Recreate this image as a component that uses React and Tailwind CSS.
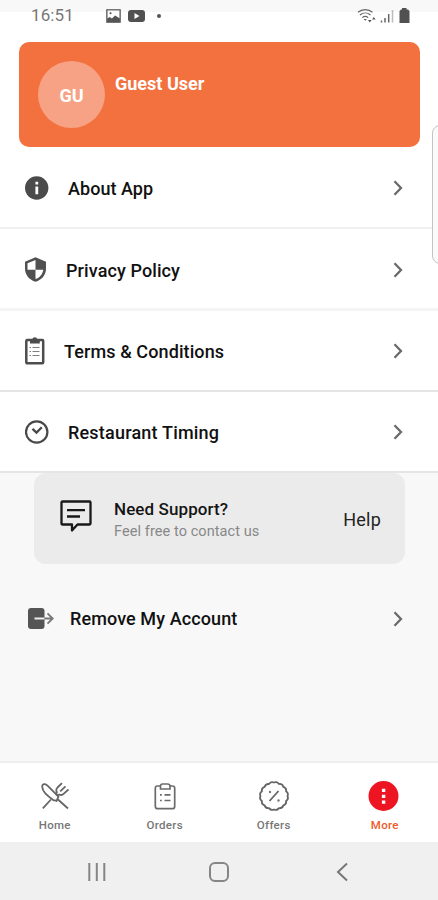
import React from 'react';

const Chevron = () => (
  <svg className="h-5 w-5 shrink-0" viewBox="0 0 20 20" fill="none" stroke="#6a6a6a" strokeWidth="2.3">
    <path d="M6.500 3.200 13 10 6.500 16.800" />
  </svg>
);

const InfoIcon = () => (
  <svg className="h-6 w-6" viewBox="0 0 24 24">
    <circle cx="11.700" cy="12" r="11.700" fill="#4b4b4b" />
    <path d="M10.400 5.800h2.800v2.700h-2.800zM10.400 10.400h2.800v7.800h-2.800z" fill="#fff" />
  </svg>
);

const ShieldIcon = () => (
  <svg className="h-[25px] w-[22px]" viewBox="0 0 22 25">
    <path d="M10.500 .3 21 4.800v7c0 6.100-4.300 11.300-10.500 12.900C4.300 23.100 0 17.900 0 11.800v-7z" fill="#505050" />
    <path d="M10.500 3v9.700H2.500V6.300zM10.500 12.700h7.800c-.6 4.300-3.500 8-7.800 9.300z" fill="#fff" />
  </svg>
);

const TermsIcon = () => (
  <svg className="h-7 w-5" viewBox="0 0 20 28" fill="none" stroke="#4d4d4d">
    <rect x="1.300" y="3" width="16.900" height="23.300" rx="1" strokeWidth="2.500" />
    <path d="M5 2.300h2.300C7.600.9 8.500.2 9.800.2s2.200.7 2.500 2.100h2.500V6.500H5z" fill="#4d4d4d" stroke="none" />
    <path d="M4.500 10.500H6M7.500 10.500h7M4.500 14.500H6M7.500 14.500h7M4.500 18.500H6M7.500 18.500h7" strokeWidth="1.200" stroke="#808080" />
  </svg>
);

const ClockIcon = () => (
  <svg className="h-6 w-6" viewBox="0 0 24 24" fill="none" stroke="#484848">
    <circle cx="11.700" cy="12" r="10.700" strokeWidth="2.200" />
    <path d="m7.500 8.900 4 3.700 5.300-5.300" strokeWidth="2.300" />
  </svg>
);

const StatusBar = () => (
  <div className="flex h-[42px] shrink-0 flex-col">
    <div className="h-3 shrink-0 bg-[#f8f8f8]" />
    <div className="-mt-3 flex h-[31px] items-center pl-[31px] pr-7 text-[#777]">
      <span className="w-[75px] whitespace-nowrap pt-px text-[17px] tracking-[0.1px]">16:51</span>
      <svg className="h-[14px] w-[15px]" viewBox="0 0 14 14" preserveAspectRatio="none" fill="none" stroke="#555">
        <rect x=".8" y=".8" width="12.400" height="12.400" strokeWidth="1.200" />
        <path d="m1 9.500 2.500-1.500 2 1.500 3-3L13 9.500V13H1z" fill="#555" stroke="none" />
        <circle cx="4.200" cy="4.200" r="1" fill="#555" stroke="none" />
      </svg>
      <svg className="ml-[7px] h-3 w-[17px]" viewBox="0 0 17 12">
        <rect width="17" height="12" rx="3" fill="#515151" />
        <path d="m6.500 3 5 3-5 3z" fill="#fff" />
      </svg>
      <span className="ml-[12px] h-[4px] w-[4px] rounded-full bg-[#555]" />
      <svg className="ml-auto h-4 w-[20px]" viewBox="0 0 20 16" fill="none" stroke="#666" strokeWidth="1.200">
        <path d="M1 4.300c4.200-3.700 10.300-3.700 14.500 0M3 7c3.100-2.700 7.400-2.700 10.500 0M5.300 9.600c1.800-1.500 4.100-1.500 5.900 0" />
        <path d="m6.700 11 1.500 1.700L9.800 11zM11 12h3.600l-1.800 2.600zM15 11.500h3.600l-1.800-2.600z" fill="#555" stroke="none" />
      </svg>
      <svg className="ml-[3px] h-[14px] w-[14px]" viewBox="0 0 14 14" strokeWidth="1.500" stroke="#666">
        <path d="M1.500 11.500V13.500M5 9v4.500M8.700 5v8.500" />
        <path d="M12.500 1v12.500" stroke="#bbb" />
      </svg>
      <svg className="ml-[5px] h-[15px] w-[11px]" viewBox="0 0 11 15">
        <path d="M3 0h4.500v1.500H9L10.500 3v12H.5V3L2 1.500h1z" fill="#515151" />
      </svg>
    </div>
  </div>
);

const Row = ({ icon, label, box, border, text }) => (
  <div className={'flex shrink-0 items-center bg-white pl-[25px] pr-[30px] ' + box + ' ' + border}>
    {icon}
    <span className={'whitespace-nowrap text-[18px] font-medium leading-6 text-[#111] ' + text}>{label}</span>
    <span className="ml-auto"><Chevron /></span>
  </div>
);

const Tab = ({ icon, label, color }) => (
  <div className="flex w-[110px] flex-col items-center pt-[17px]">
    <div className="flex h-8 items-center">{icon}</div>
    <span className={'mt-[5px] text-[11.500px] font-medium leading-4 tracking-[0.300px] ' + color}>{label}</span>
  </div>
);

const HomeIcon = () => (
  <svg className="h-7 w-7" viewBox="0 0 28 28" fill="none" stroke="#666" strokeWidth="1.800" strokeLinejoin="round">
    <path d="M1.500 3c1.500-1.800 3.600-.7 5 .7l11 11-2 4.300c-.6-.9-1.500-.8-2.600-.6C7 14.500-.3 8.500 1.500 3z" />
    <path d="m17 17.500 10 9M10 17.500 1.800 26.300M21 1.200l-4.500 4.300c-1.400 1.500-1.400 3.400-.6 4.800l-1 1.400 1.600 1.800 1.600-1c1.600.8 3.400.6 4.800-.8l4.600-4.300M24.500 4.300l-5.300 5" />
  </svg>
);

const OrdersIcon = () => (
  <svg className="h-[27px] w-[22px]" viewBox="0 0 22 27" fill="none" stroke="#6b6b6b" strokeWidth="1.700">
    <path d="M6 3H3.500Q1.300 3 1.300 5.200v18Q1.300 25.700 3.700 25.700h14.800Q20.700 25.700 20.700 23.200v-18Q20.700 3 18.500 3H16" />
    <path d="M8.500 1h5Q16 1 16 3.200V6H6.500V3.200Q6.500 1 8.500 1z" />
    <path d="M6 11.800h1.800M10.500 11.800h6M6 17.500h1.800M10.500 17.500h6" />
  </svg>
);

const OffersIcon = () => (
  <svg className="h-[30px] w-[30px]" viewBox="0 0 30 30" fill="none" stroke="#646464" strokeWidth="1.800" strokeLinejoin="round">
    <path d="M15 1.500C17 .7 18.700 1.200 20 3c2.200-.2 3.800.7 4.400 2.900C26.500 6.600 27.500 8.100 27.100 10.300 28.900 11.600 29.400 13.200 28.500 15.200 29.400 17.200 28.900 18.900 27.100 20.100 27.500 22.300 26.500 23.700 24.400 24.400 23.700 26.500 22.200 27.400 20 27.100 18.700 28.900 17 29.400 15 28.500 13 29.400 11.300 28.900 10 27.100 7.800 27.400 6.300 26.500 5.600 24.400 3.500 23.700 2.500 22.300 2.900 20.100 1.100 18.900.6 17.200 1.500 15.200.6 13.200 1.100 11.600 2.900 10.300 2.500 8.100 3.500 6.600 5.600 5.900 6.300 3.700 7.800 2.800 10 3 11.300 1.200 13 .7 15 1.500zM10.500 20l9-10" />
    <circle cx="11" cy="11" r="1.200" fill="#777" stroke="none" />
    <circle cx="19.500" cy="19.500" r="1.200" fill="#777" stroke="none" />
  </svg>
);

const MoreIcon = () => (
  <svg className="h-[31px] w-[31px]" viewBox="0 0 31 31">
    <circle cx="15.500" cy="15" r="15" fill="#ee1523" />
    <path d="M13.900 7.800h3.400v3.200h-3.400zM13.900 13.700h3.400v3.200h-3.400zM13.900 19.600h3.400v3.200h-3.400z" fill="#fff" />
  </svg>
);

export default function App() {
  return (
    <div className="relative flex h-[900px] w-[438px] flex-col overflow-hidden bg-[#f8f8f8] font-['Roboto',sans-serif]">
      <div className="shrink-0 bg-white">
        <StatusBar />
        <div className="ml-[19px] flex h-[105px] w-[401px] items-start rounded-[10px] bg-[#f3713e] pl-[19px] pt-[19px] text-white">
          <div className="flex h-[67px] w-[67px] items-center justify-center rounded-full bg-[#f7a284] pt-[2px] text-[18px] font-bold">GU</div>
          <span className="ml-[10px] mt-[11px] text-[18px] font-bold leading-6">Guest User</span>
        </div>
      </div>
      <Row box="h-[82px] pt-[2px]" border="border-b-2 border-[#efefef]" icon={<span className="w-[43px]"><InfoIcon /></span>} label="About App" text="pt-[2px] tracking-[0.050px]" />
      <Row box="h-[82px] pt-[2px]" border="border-b-[3px] border-[#f5f5f5]" icon={<span className="w-[41px]"><ShieldIcon /></span>} label="Privacy Policy" text="pt-[2px] tracking-[0.100px]" />
      <Row box="h-[81px]" border="border-b-2 border-[#e5e5e5]" icon={<span className="w-[39px]"><TermsIcon /></span>} label="Terms & Conditions" text="pt-[2px] tracking-[0.100px]" />
      <Row box="h-[81px]" border="border-b-2 border-[#e5e5e5]" icon={<span className="w-[43px]"><ClockIcon /></span>} label="Restaurant Timing" text="pt-[2px] tracking-[0.200px]" />
      <div className="ml-[34px] flex h-[91px] w-[371px] shrink-0 items-center rounded-xl bg-[#ebebeb] pl-[26px] pr-6 pt-[2px]">
        <svg className="-mt-2 h-[32px] w-[32px]" viewBox="0 0 32 32" fill="none" stroke="#191919" strokeWidth="2.300" strokeLinejoin="round">
          <path d="M2.500 1.500h27q1 0 1 1v21q0 1-1 1H17.500L12 30.500V24.500H2.500q-1 0-1-1v-21q0-1 1-1z" />
          <path d="M7 10.200h18M7 16.500h13" />
        </svg>
        <div className="ml-[22px] flex flex-col whitespace-nowrap">
          <span className="text-[17px] font-medium leading-[23px] tracking-[0.100px] text-[#151515]">Need Support?</span>
          <span className="text-[14.500px] leading-[21px] tracking-[0.080px] text-[#888]">Feel free to contact us</span>
        </div>
        <span className="ml-auto text-[18px] tracking-[0.200px] text-[#222]">Help</span>
      </div>
      <div className="flex h-[109px] shrink-0 items-center pl-7 pr-[30px]">
        <svg className="h-[22px] w-[27px]" viewBox="0 0 27 22" fill="none">
          <rect width="16.500" height="21" rx="3" fill="#555" />
          <path d="M6.500 10.500H16.500" stroke="#eee" strokeWidth="2" />
          <path d="M16.500 10.500h8M19.500 5.300l5.200 5.200-5.200 5.200" stroke="#777" strokeWidth="1.800" />
        </svg>
        <span className="ml-[15px] whitespace-nowrap text-[18px] font-medium leading-6 tracking-[0.1px] text-[#111]">Remove My Account</span>
        <span className="ml-auto"><Chevron /></span>
      </div>
      <div className="mt-auto flex h-[81px] shrink-0 border-t-2 border-[#eeeeee] bg-white">
        <Tab icon={<HomeIcon />} label="Home" color="text-[#777]" />
        <Tab icon={<span className="pl-[2px]"><OrdersIcon /></span>} label="Orders" color="pl-px text-[#777]" />
        <Tab icon={<span className="pl-px"><OffersIcon /></span>} label="Offers" color="text-[#777]" />
        <Tab icon={<span className="pl-px"><MoreIcon /></span>} label="More" color="pl-[3px] text-[#ee5a2a]" />
      </div>
      <div className="flex h-[58px] shrink-0 items-center bg-[#f0f0f0] pl-[87px] pt-[2px]">
        <svg className="h-[18px] w-5" viewBox="0 0 20 18" stroke="#858585" strokeWidth="2">
          <path d="M2.300 0v18M9.800 0v18M17.300 0v18" />
        </svg>
        <span className="ml-[102px] h-[20px] w-[20px] rounded-[6px] border-2 border-[#858585]" />
        <svg className="ml-[107px] h-5 w-3" viewBox="0 0 12 20" fill="none" stroke="#777" strokeWidth="2">
          <path d="M11 1.500 2 10l9 8.500" />
        </svg>
      </div>
      <div className="absolute right-[-10px] top-[125px] h-[139px] w-4 rounded-lg border border-[#c4c4c4] bg-[#fafafa]" />
    </div>
  );
}
